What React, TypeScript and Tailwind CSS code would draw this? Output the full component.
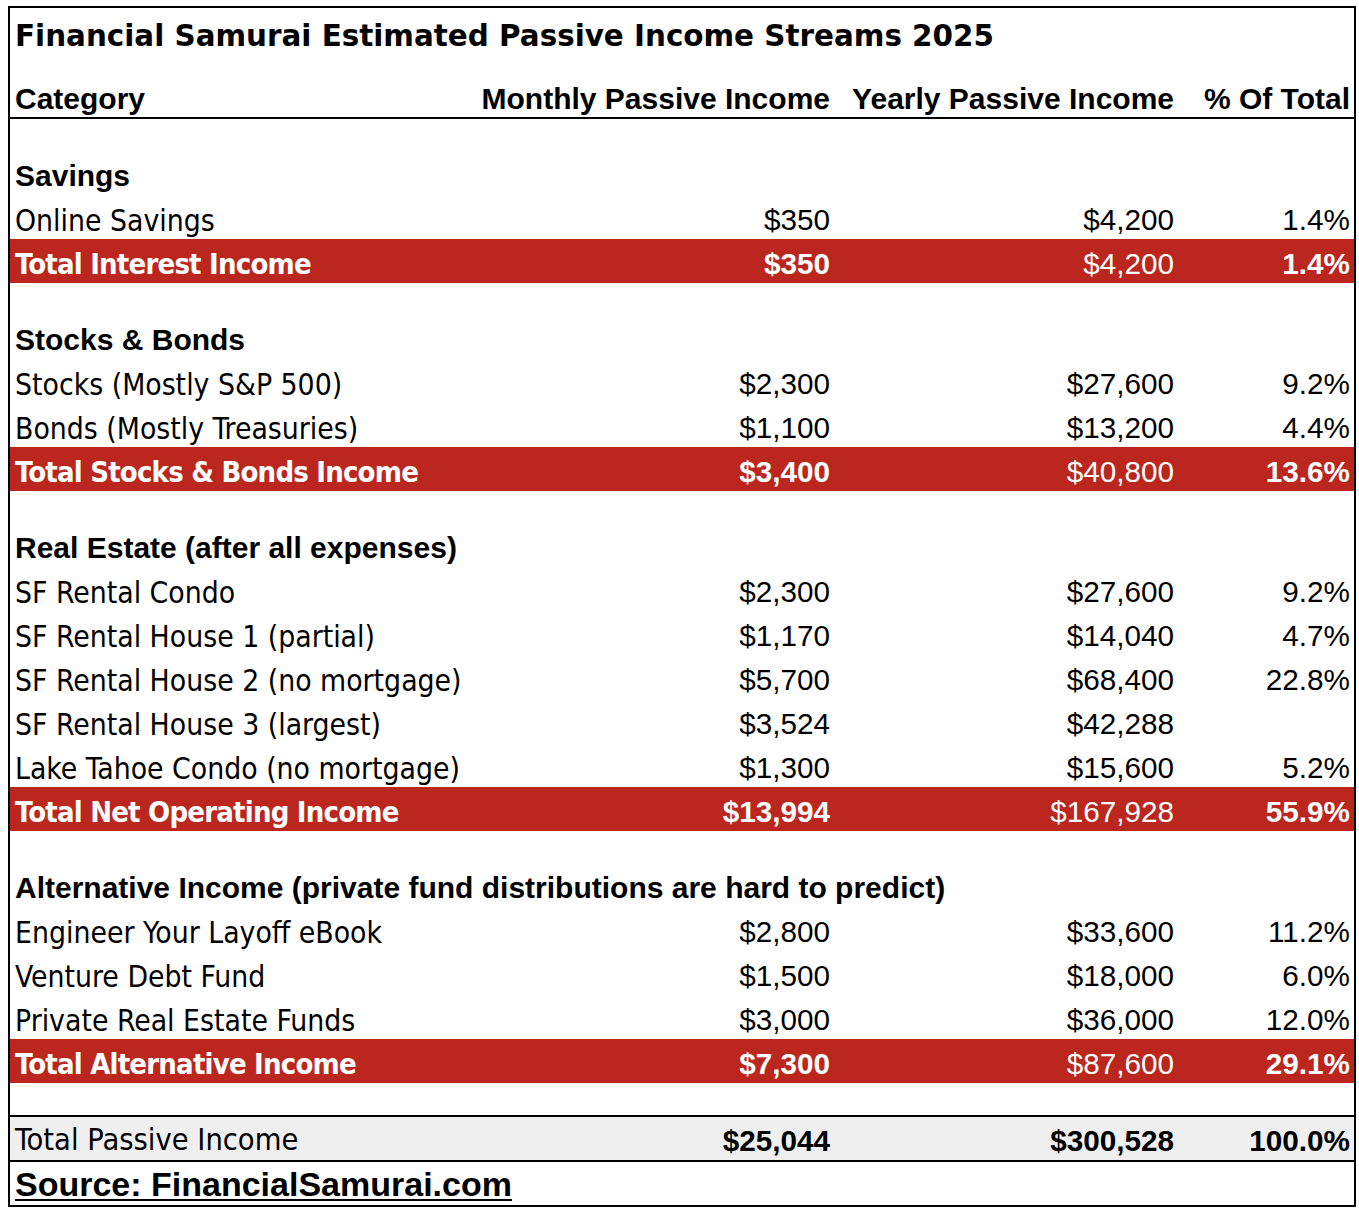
import React from 'react';

// --- fonts ---
const tahoma = "font-['DejaVu_Sans_Condensed','DejaVu_Sans',sans-serif]";
const verdana = "font-['DejaVu_Sans',sans-serif]";
const arial = "font-['Liberation_Sans',Arial,sans-serif]";

type Row =
  | { kind: 'blank' }
  | { kind: 'section'; label: string }
  | { kind: 'item'; label: string; monthly: string; yearly: string; pct: string }
  | { kind: 'total'; label: string; monthly: string; yearly: string; pct: string };

const rows: Row[] = [
  { kind: 'blank' },
  { kind: 'section', label: 'Savings' },
  { kind: 'item', label: 'Online Savings', monthly: '$350', yearly: '$4,200', pct: '1.4%' },
  { kind: 'total', label: 'Total Interest Income', monthly: '$350', yearly: '$4,200', pct: '1.4%' },
  { kind: 'blank' },
  { kind: 'section', label: 'Stocks & Bonds' },
  { kind: 'item', label: 'Stocks (Mostly S&P 500)', monthly: '$2,300', yearly: '$27,600', pct: '9.2%' },
  { kind: 'item', label: 'Bonds (Mostly Treasuries)', monthly: '$1,100', yearly: '$13,200', pct: '4.4%' },
  { kind: 'total', label: 'Total Stocks & Bonds Income', monthly: '$3,400', yearly: '$40,800', pct: '13.6%' },
  { kind: 'blank' },
  { kind: 'section', label: 'Real Estate (after all expenses)' },
  { kind: 'item', label: 'SF Rental Condo', monthly: '$2,300', yearly: '$27,600', pct: '9.2%' },
  { kind: 'item', label: 'SF Rental House 1 (partial)', monthly: '$1,170', yearly: '$14,040', pct: '4.7%' },
  { kind: 'item', label: 'SF Rental House 2 (no mortgage)', monthly: '$5,700', yearly: '$68,400', pct: '22.8%' },
  { kind: 'item', label: 'SF Rental House 3 (largest)', monthly: '$3,524', yearly: '$42,288', pct: '' },
  { kind: 'item', label: 'Lake Tahoe Condo (no mortgage)', monthly: '$1,300', yearly: '$15,600', pct: '5.2%' },
  { kind: 'total', label: 'Total Net Operating Income', monthly: '$13,994', yearly: '$167,928', pct: '55.9%' },
  { kind: 'blank' },
  { kind: 'section', label: 'Alternative Income (private fund distributions are hard to predict)' },
  { kind: 'item', label: 'Engineer Your Layoff eBook', monthly: '$2,800', yearly: '$33,600', pct: '11.2%' },
  { kind: 'item', label: 'Venture Debt Fund', monthly: '$1,500', yearly: '$18,000', pct: '6.0%' },
  { kind: 'item', label: 'Private Real Estate Funds', monthly: '$3,000', yearly: '$36,000', pct: '12.0%' },
  { kind: 'total', label: 'Total Alternative Income', monthly: '$7,300', yearly: '$87,600', pct: '29.1%' },
  { kind: 'blank' },
];

const grid = 'grid grid-cols-[470px_354px_344px_176px]';
const num = `pr-[4px] pt-[5px] text-right text-[29.7px] ${arial}`;

const TableRow = ({ row }: { row: Row }) => {
  if (row.kind === 'blank') return <div className="h-[32px]" />;

  if (row.kind === 'section') {
    return (
      <div className={`${grid} h-[44px] items-center`}>
        <div className={`col-span-4 pl-[5px] pt-[6px] text-[30px] font-bold text-black whitespace-nowrap ${arial}`}>{row.label}</div>
      </div>
    );
  }

  if (row.kind === 'total') {
    return (
      <div className={`${grid} h-[44px] items-center bg-[#bb271e] text-white`}>
        <div className={`pl-[5px] pt-[6px] text-[29px] font-bold tracking-[-0.8px] whitespace-nowrap ${tahoma}`}>{row.label}</div>
        <div className={`${num} font-bold`}>{row.monthly}</div>
        <div className={num}>{row.yearly}</div>
        <div className={`${num} font-bold`}>{row.pct}</div>
      </div>
    );
  }

  return (
    <div className={`${grid} h-[44px] items-center text-black`}>
      <div className={`pl-[5px] pt-[7px] text-[29.8px] whitespace-nowrap ${tahoma}`}>{row.label}</div>
      <div className={num}>{row.monthly}</div>
      <div className={num}>{row.yearly}</div>
      <div className={num}>{row.pct}</div>
    </div>
  );
};

export default function App() {
  return (
    <div className="min-h-screen bg-white">
      <div className="ml-[8px] mt-[6px] w-[1348px] border-2 border-black leading-none">
        {/* title */}
        <div className={`h-[58px] pl-[5px] pt-[14px] text-[29.4px] font-bold text-black whitespace-nowrap ${verdana}`}>
          Financial Samurai Estimated Passive Income Streams 2025
        </div>

        {/* column headers */}
        <div className={`${grid} h-[53px] items-end pb-[3px] border-b-2 border-black text-[30px] font-bold text-black ${arial}`}>
          <div className="pl-[5px]">Category</div>
          <div className="pr-[4px] text-right whitespace-nowrap">Monthly Passive Income</div>
          <div className="pr-[4px] text-right whitespace-nowrap">Yearly Passive Income</div>
          <div className="pr-[4px] text-right whitespace-nowrap">% Of Total</div>
        </div>

        {rows.map((row, i) => <TableRow key={i} row={row} />)}

        {/* grand total */}
        <div className={`${grid} h-[47px] items-center bg-[#efefef] border-y-2 border-black text-black`}>
          <div className={`pl-[5px] pt-[4px] text-[30.5px] whitespace-nowrap ${tahoma}`}>Total Passive Income</div>
          <div className={`${num} font-bold`}>$25,044</div>
          <div className={`${num} font-bold`}>$300,528</div>
          <div className={`${num} font-bold`}>100.0%</div>
        </div>

        {/* source */}
        <div className="h-[43px] flex items-center">
          <span className={`pl-[5px] pt-[1px] text-[34px] font-bold underline decoration-2 underline-offset-[3px] text-black ${arial}`}>Source: FinancialSamurai.com</span>
        </div>
      </div>
    </div>
  );
}
